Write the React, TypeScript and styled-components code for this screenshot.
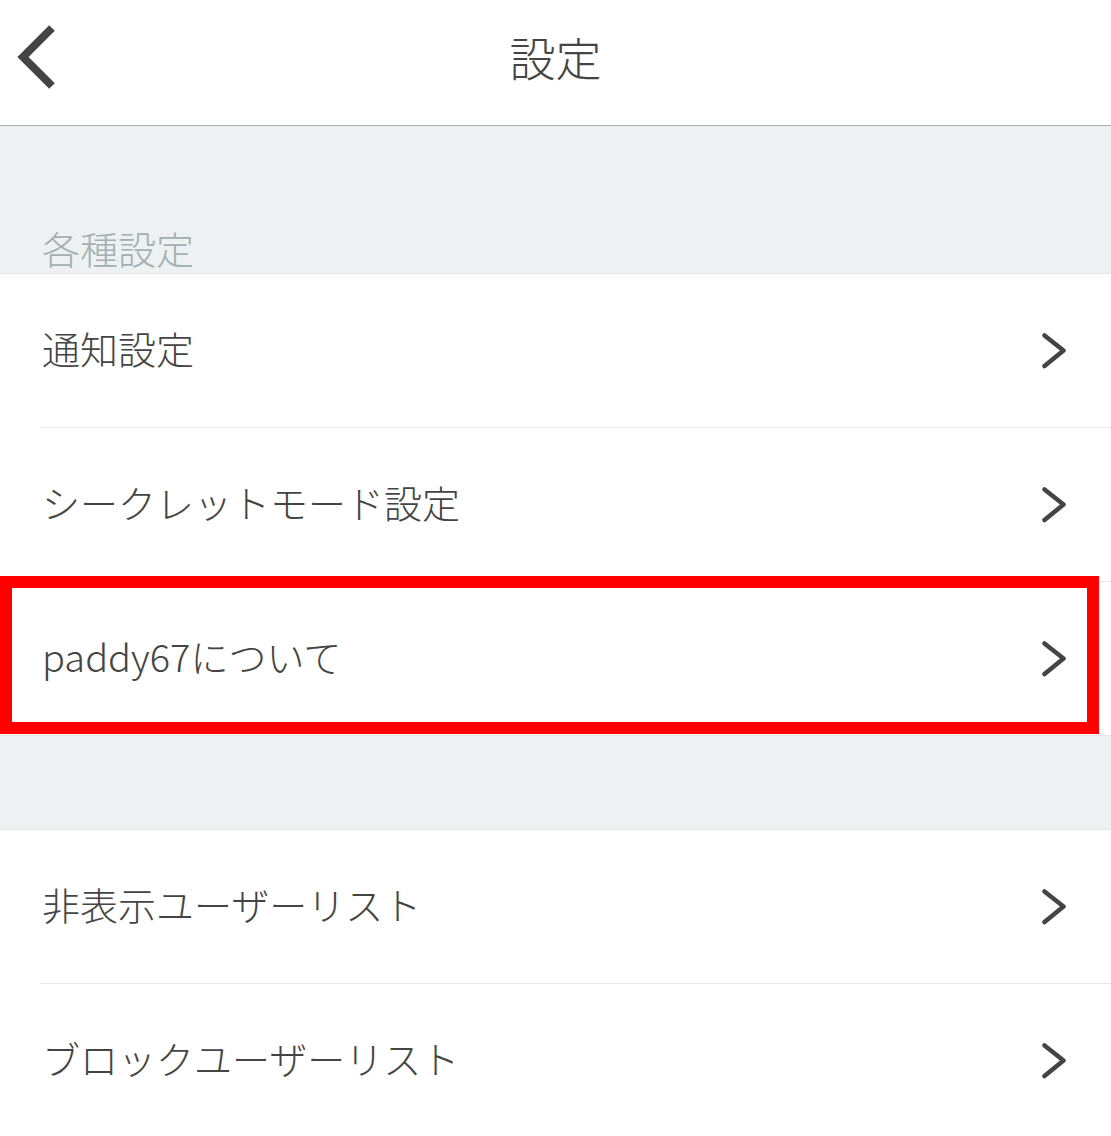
import styled, { createGlobalStyle } from "styled-components";

const GlobalStyle = createGlobalStyle`
  body {
    margin: 0;
    background: #ffffff;
    font-family: "Noto Sans CJK JP", "Noto Sans", sans-serif;
    color: #444444;
  }
`;

const Page = styled.div`
  width: 1111px;
  min-height: 1136px;
  background: #ffffff;
  overflow: hidden;
`;

const Header = styled.header`
  height: 125px;
  display: grid;
  grid-template-columns: 1fr auto 1fr;
  align-items: center;
  border-bottom: 1px solid #adadad;
  background: #ffffff;
`;

const BackButton = styled.button`
  justify-self: start;
  display: flex;
  padding: 0 0 12px 16px;
  border: none;
  background: none;
  cursor: pointer;
`;

const Title = styled.h1`
  margin: 0 0 14px;
  font-size: 46px;
  font-weight: 300;
  line-height: 1;
  color: #444444;
`;

const SectionGap = styled.div<{ $height: number; $topLine?: boolean }>`
  height: ${p => p.$height}px;
  display: flex;
  flex-direction: column;
  justify-content: flex-end;
  padding: 0 42px;
  background: #edf1f2;
  border-top: ${p => (p.$topLine ? "1px solid #e2e6e7" : "none")};
  border-bottom: 1px solid #e2e6e7;
`;

const SectionLabel = styled.div`
  font-size: 38px;
  font-weight: 300;
  line-height: 38px;
  padding-bottom: 6px;
  color: #a4afb1;
`;

const Group = styled.div`
  background: #ffffff;
`;

const Row = styled.div`
  position: relative;
  padding-left: 40px;
  cursor: pointer;

  &:last-child > div {
    border-bottom: none;
  }
`;

const RowInner = styled.div`
  height: 153px;
  display: flex;
  align-items: center;
  justify-content: space-between;
  padding: 0 43px 0 2px;
  border-bottom: 1px solid #e4e6e7;
`;

const RowLabel = styled.span`
  font-size: 38px;
  font-weight: 300;
  line-height: 1;
  padding-bottom: 6px;
  color: #444444;
`;

const Highlight = styled.span`
  position: absolute;
  top: -6px;
  left: 0;
  right: 12px;
  bottom: 1px;
  border: 12px solid #ff0000;
  pointer-events: none;
`;

function BackIcon() {
  return (
    <svg width="42" height="66" viewBox="0 0 42 66">
      <polyline
        points="36,4 7,33 36,62"
        fill="none"
        stroke="#444444"
        strokeWidth="8"
        strokeLinejoin="miter"
      />
    </svg>
  );
}

function ChevronIcon() {
  return (
    <svg width="26" height="36" viewBox="0 0 26 36">
      <polyline
        points="2.5,2.5 21.5,17.5 2.5,33"
        fill="none"
        stroke="#444444"
        strokeWidth="4.5"
        strokeLinecap="round"
        strokeLinejoin="round"
      />
    </svg>
  );
}

type Item = { label: string; highlighted?: boolean };

const generalItems: Item[] = [
  { label: "通知設定" },
  { label: "シークレットモード設定" },
  { label: "paddy67について", highlighted: true }
];

const userItems: Item[] = [
  { label: "非表示ユーザーリスト" },
  { label: "ブロックユーザーリスト" }
];

function SettingsRow({ label, highlighted }: Item) {
  return (
    <Row>
      <RowInner>
        <RowLabel>{label}</RowLabel>
        <ChevronIcon />
      </RowInner>
      {highlighted && <Highlight />}
    </Row>
  );
}

export default function App() {
  return (
    <Page>
      <GlobalStyle />
      <Header>
        <BackButton aria-label="戻る">
          <BackIcon />
        </BackButton>
        <Title>設定</Title>
        <span />
      </Header>
      <SectionGap $height={147}>
        <SectionLabel>各種設定</SectionLabel>
      </SectionGap>
      <Group>
        {generalItems.map(item => (
          <SettingsRow key={item.label} {...item} />
        ))}
      </Group>
      <SectionGap $height={93} $topLine />
      <Group>
        {userItems.map(item => (
          <SettingsRow key={item.label} {...item} />
        ))}
      </Group>
    </Page>
  );
}
